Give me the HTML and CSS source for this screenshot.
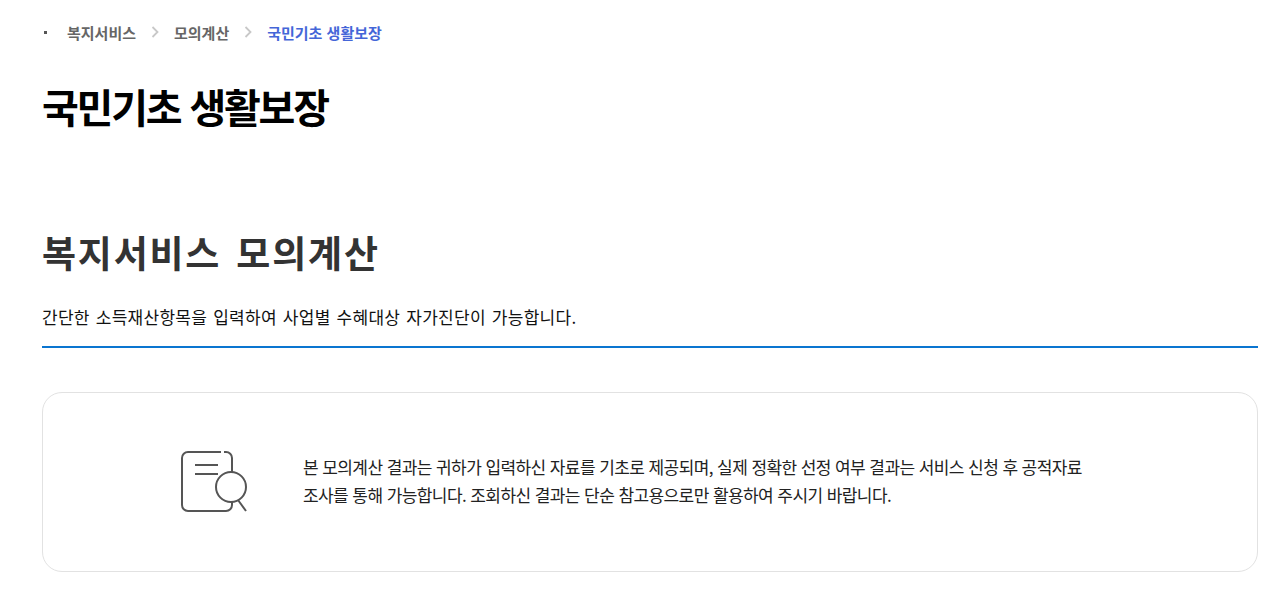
FILE: index.html

```html
<!DOCTYPE html>
<html lang="ko">
<head>
    <meta charset="UTF-8">
    <title>국민기초 생활보장</title>
    <link rel="stylesheet" href="styles.css">
</head>
<body>
    <div class="wrap">
        <!-- 경로 -->
        <ul class="breadcrumb">
            <li class="crumb">복지서비스</li>
            <li class="sep"><svg width="8" height="12" viewBox="0 0 8 12"><path d="M1.5 1l5 5-5 5" fill="none" stroke="#c8c8c8" stroke-width="1.8"/></svg></li>
            <li class="crumb">모의계산</li>
            <li class="sep"><svg width="8" height="12" viewBox="0 0 8 12"><path d="M1.5 1l5 5-5 5" fill="none" stroke="#c8c8c8" stroke-width="1.8"/></svg></li>
            <li class="crumb current">국민기초 생활보장</li>
        </ul>
        <h1 class="page_title">국민기초 생활보장</h1>
        <h2 class="sec_title">복지서비스 모의계산</h2>
        <p class="sec_desc">간단한 소득재산항목을 입력하여 사업별 수혜대상 자가진단이 가능합니다.</p>
        <!-- 안내 박스 -->
        <div class="notice">
            <svg class="notice_icon" width="68" height="64" viewBox="0 0 68 64" fill="none" stroke="#555" stroke-width="2">
                <path d="M40 2H7a6 6 0 0 0-6 6v47a6 6 0 0 0 6 6h38a6 6 0 0 0 6-6v-3"/>
                <path d="M43 2h2a6 6 0 0 1 6 6v14"/>
                <path d="M14 15h23M14 24h23"/>
                <circle cx="50" cy="37" r="15"/>
                <path d="M57 50l8 11"/>
            </svg>
            <p class="notice_text">본 모의계산 결과는 귀하가 입력하신 자료를 기초로 제공되며, 실제 정확한 선정 여부 결과는 서비스 신청 후 공적자료<br>조사를 통해 가능합니다. 조회하신 결과는 단순 참고용으로만 활용하여 주시기 바랍니다.</p>
        </div>
    </div>
</body>
</html>
```

FILE: styles.css

```css
html, body, div, h1, h2, p, ul, li {
    margin: 0;
    padding: 0;
}
html, body {
    height: 100%;
    background-color: #fff;
}
body {
    font-family: "Noto Sans CJK KR", "Noto Sans", sans-serif;
    overflow: hidden;
}
ul {
    list-style: none;
}
.wrap {
    padding: 22px 27px 0 42px;
}
.breadcrumb {
    display: flex;
    align-items: center;
    height: 20px;
    font-size: 15px;
    font-weight: 700;
    color: #666;
}
.breadcrumb:before {
    content: "";
    width: 3px;
    height: 3px;
    margin: 0 20px 0 2px;
    background-color: #555;
}
.sep {
    display: flex;
    margin: 0 15px;
}
.current {
    color: #4466d8;
}
.page_title {
    margin-top: 38px;
    font-size: 40px;
    line-height: 52px;
    font-weight: 700;
    letter-spacing: -2.2px;
    color: #000;
}
.sec_title {
    margin-top: 94px;
    font-size: 37px;
    line-height: 52px;
    font-weight: 700;
    letter-spacing: 1.8px;
    word-spacing: 3px;
    color: #333;
}
.sec_desc {
    margin-top: 27px;
    padding-bottom: 17px;
    border-bottom: 2px solid #0a75d0;
    font-size: 17px;
    line-height: 24px;
    letter-spacing: 0.27px;
    word-spacing: 1px;
    color: #111;
}
.notice {
    display: flex;
    align-items: center;
    height: 180px;
    margin-top: 44px;
    box-sizing: border-box;
    padding-left: 138px;
    border: 1px solid #e2e2e2;
    border-radius: 20px;
}
.notice_icon {
    flex: none;
    margin-right: 54px;
}
.notice_text {
    padding-bottom: 2px;
    font-size: 17px;
    line-height: 28px;
    letter-spacing: -0.58px;
    color: #222;
}
```
